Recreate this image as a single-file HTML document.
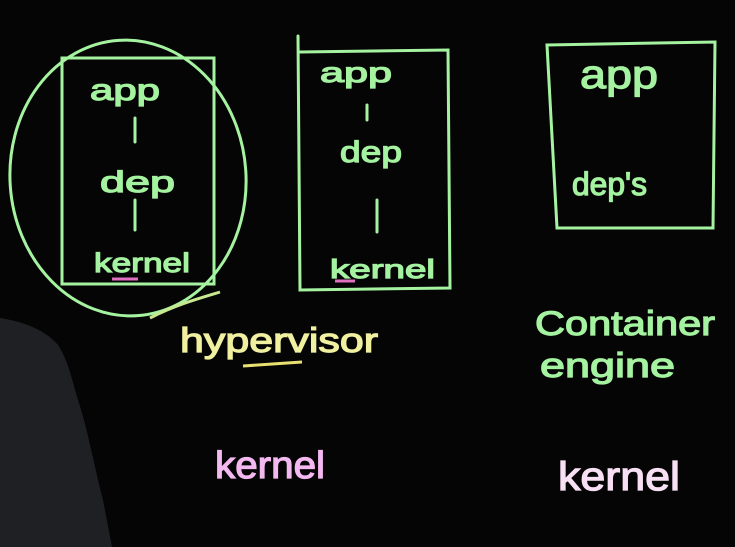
<!DOCTYPE html>
<html><head><style>
html,body{margin:0;padding:0;background:#050505;width:735px;height:547px;overflow:hidden}
svg{display:block}
text{font-family:"Liberation Sans",sans-serif;stroke-width:1.2}
</style></head><body>
<svg width="735" height="547" viewBox="0 0 735 547" xmlns="http://www.w3.org/2000/svg">
<rect width="735" height="547" fill="#050505"/>
<path d="M0,318 C25,322 45,330 58,345 C68,360 72,380 78,400 C88,430 95,470 103,500 L112,547 L0,547 Z" fill="#1f2024"/>
<g fill="none" stroke="#a5f3a0" stroke-width="3" stroke-linecap="round">
<rect x="62" y="58" width="152" height="226"/>
<ellipse cx="128" cy="178" rx="118" ry="138" transform="rotate(-4 128 178)"/>
<path d="M135 118 L135 142 M135 200 L135 230"/>
<path d="M298 36 L300 290 L450 288 L448 50 L300 52"/>
<path d="M367 105 L367 120 M377 200 L377 232"/>
<path d="M547 45 L715 42 L713 228 L557 228 Z"/>
</g>
<path d="M150 318 C175 305 200 298 220 292" stroke="#c8e890" stroke-width="3" fill="none"/>
<path d="M112 279 L138 279 M335 281 L355 281" stroke="#e070c0" stroke-width="3"/>
<path d="M243 366 L302 362" stroke="#e8e070" stroke-width="3"/>
<g fill="#a5f3a0" stroke="#a5f3a0" font-size="30">
<text x="90" y="100" textLength="70" lengthAdjust="spacingAndGlyphs">app</text>
<text x="100" y="192" textLength="75" lengthAdjust="spacingAndGlyphs">dep</text>
<text x="94" y="272" font-size="27" textLength="96" lengthAdjust="spacingAndGlyphs">kernel</text>
<text x="320" y="82" font-size="28" textLength="72" lengthAdjust="spacingAndGlyphs">app</text>
<text x="340" y="162" textLength="62" lengthAdjust="spacingAndGlyphs">dep</text>
<text x="330" y="278" font-size="26" textLength="105" lengthAdjust="spacingAndGlyphs">kernel</text>
<text x="580" y="88" font-size="40" textLength="78" lengthAdjust="spacingAndGlyphs">app</text>
<text x="572" y="195" font-size="32" textLength="75" lengthAdjust="spacingAndGlyphs">dep's</text>
<text x="535" y="335" font-size="34" textLength="180" lengthAdjust="spacingAndGlyphs">Container</text>
<text x="540" y="377" font-size="34" textLength="135" lengthAdjust="spacingAndGlyphs">engine</text>
</g>
<text x="180" y="352" fill="#f0f0a0" stroke="#f0f0a0" font-size="34" textLength="198" lengthAdjust="spacingAndGlyphs">hypervisor</text>
<text x="215" y="478" fill="#f4b8f0" stroke="#f4b8f0" font-size="38" textLength="110" lengthAdjust="spacingAndGlyphs">kernel</text>
<text x="558" y="490" fill="#f8e0f4" stroke="#f8e0f4" font-size="40" textLength="122" lengthAdjust="spacingAndGlyphs">kernel</text>
</svg>
</body></html>
